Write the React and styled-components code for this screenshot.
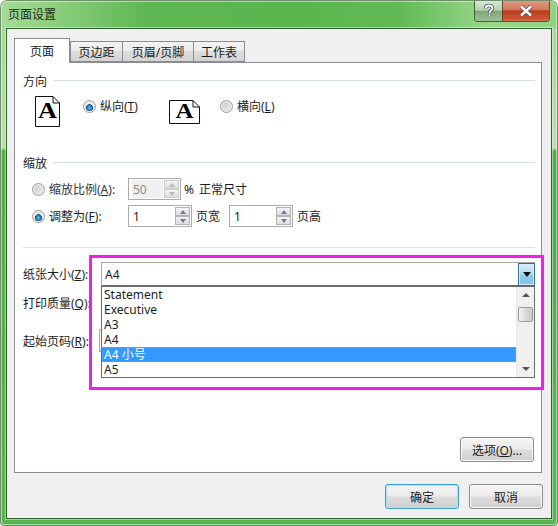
import * as React from "react";
import styled, { createGlobalStyle } from "styled-components";

const GlobalStyle = createGlobalStyle`
  html, body {
    margin: 0;
    padding: 0;
    background: #fff;
  }
  body {
    font-family: "Noto Sans", "Noto Sans CJK SC", sans-serif;
    font-size: 12px;
    color: #1c1c1c;
  }
  u {
    text-underline-offset: 1px;
  }
`;

const Window = styled.div`
  box-sizing: border-box;
  width: 558px;
  height: 526px;
  padding: 0 7px 8px;
  display: flex;
  flex-direction: column;
  border-radius: 7px 7px 4px 4px;
  background:
    linear-gradient(90deg, #a6dc98 0, #8fd07f 50px, #5db652 150px, #5bb54f 300px, #62ba56 400px, #9ad88c 490px, #8fd283 558px) 0 0 / 100% 29px no-repeat,
    linear-gradient(#a0d896 0, #b5e2ab 148px, #4fb048 151px, #55b54e 100%);
  box-shadow: inset 0 0 0 1px #6f8f6a, inset 0 0 0 2px rgba(255, 255, 255, 0.5);
`;

const TitleBar = styled.div`
  height: 29px;
  flex: none;
  display: flex;
  justify-content: space-between;
  align-items: flex-start;
`;

const Caption = styled.div`
  margin: 7px 0 0 1px;
  font-size: 12px;
  line-height: 15px;
  color: #1a2a18;
`;

const CaptionButtons = styled.div`
  display: flex;
  height: 20px;
  margin-top: 1px;
  margin-right: 1px;
  border: 1px solid #3f5f3d;
  border-top: 0;
  border-radius: 0 0 4px 4px;
  overflow: hidden;
`;

const CaptionButton = styled.div`
  width: ${({ $wide }) => ($wide ? "46px" : "27px")};
  display: flex;
  align-items: center;
  justify-content: center;
  background: ${({ $wide }) =>
    $wide
      ? "linear-gradient(#e09a82 0, #d27a60 42%, #bd3e1c 50%, #c8502e 85%, #d46c4c 100%)"
      : "linear-gradient(#d6e6d2 0, #b6d2b0 45%, #7da876 52%, #9cc096 100%)"};
  border-left: ${({ $wide }) => ($wide ? "1px solid #6d3a2c" : "0")};
`;

const Client = styled.div`
  flex: 1;
  min-height: 0;
  display: flex;
  flex-direction: column;
  background: #f0f0f0;
  box-shadow: 0 0 0 1px #2f5f2e, 0 0 0 2px rgba(255, 255, 255, 0.45);
  padding: 9px 9px 9px 7px;
`;

const TabStrip = styled.div`
  height: 24px;
  flex: none;
  display: flex;
  align-items: flex-end;
  position: relative;
  z-index: 1;
`;

const Tab = styled.div`
  box-sizing: border-box;
  width: ${({ $w }) => $w}px;
  height: ${({ $active }) => ($active ? "25px" : "21px")};
  margin-bottom: ${({ $active }) => ($active ? "-1px" : "0")};
  margin-left: ${({ $first }) => ($first ? "0" : "-1px")};
  border: 1px solid #898c95;
  border-bottom: ${({ $active }) => ($active ? "0" : "1px solid #898c95")};
  background: ${({ $active }) => ($active ? "#fff" : "linear-gradient(#f3f3f3, #ececec 45%, #dcdcdc 50%, #d4d4d4)")};
  display: flex;
  align-items: center;
  justify-content: center;
  font-size: 12px;
`;

const Pane = styled.div`
  box-sizing: border-box;
  position: relative;
  flex: 1;
  min-height: 0;
  display: flex;
  flex-direction: column;
  background: #fff;
  border: 1px solid #898c95;
  padding: 10px 6px 10px 8px;
`;

const GroupHead = styled.div`
  display: flex;
  align-items: center;
  gap: 6px;
  height: 15px;
  margin-top: ${({ $top }) => $top || 0}px;
  &::after {
    content: "";
    flex: 1;
    height: 1px;
    background: #d8dfe8;
  }
`;

const Orientation = styled.div`
  display: flex;
  align-items: flex-start;
  margin: 8px 0 0 12px;
  height: 31px;
`;

const PageIcon = styled.svg`
  flex: none;
  display: block;
  overflow: visible;
  margin-top: ${({ $top }) => $top || 0}px;
`;

const RadioItem = styled.div`
  box-sizing: border-box;
  display: flex;
  align-items: center;
  gap: 4px;
  height: 20px;
  width: ${({ $w }) => ($w ? `${$w}px` : "auto")};
  margin-left: ${({ $left }) => $left}px;
`;

const Radio = styled.span`
  box-sizing: border-box;
  flex: none;
  width: 13px;
  height: 13px;
  border-radius: 50%;
  border: 1px solid #9a9a9a;
  box-shadow: inset 0 0 0 1px #f4f4f4;
  background: ${({ $on }) =>
    $on
      ? "radial-gradient(circle at 50% 62%, #6ec4ee 0, #1f7fc0 2.2px, #0e4f86 3.4px, #e9e9e9 3.6px, #d8d8d8 100%)"
      : "linear-gradient(135deg, #c9c9c9, #ededed)"};
`;

const ScaleRow = styled.div`
  display: flex;
  align-items: center;
  height: 22px;
  margin: ${({ $top }) => $top}px 0 0 9px;
`;

const RadioLabel = styled.span`
  width: 79px;
  flex: none;
  margin-left: 4px;
  color: ${({ $muted }) => ($muted ? "#333" : "inherit")};
`;

const Spin = styled.div`
  box-sizing: border-box;
  width: ${({ $w }) => $w}px;
  height: 22px;
  flex: none;
  display: flex;
  align-items: center;
  justify-content: space-between;
  background: #fff;
  border: 1px solid #ababab;
  padding: 1px 1px 1px 3px;
  color: ${({ $disabled }) => ($disabled ? "#8a8a8a" : "#1c1c1c")};
`;

const SpinValue = styled.span`
  flex: 1;
  align-self: stretch;
  display: flex;
  align-items: center;
  padding-left: 1px;
  margin-right: 1px;
  background: ${({ $disabled }) => ($disabled ? "#f0f0f0" : "#fff")};
`;

const SpinButtons = styled.div`
  width: 15px;
  align-self: stretch;
  display: flex;
  flex-direction: column;
`;

const SpinButton = styled.div`
  flex: 1;
  display: flex;
  align-items: center;
  justify-content: center;
  border: 1px solid ${({ $disabled }) => ($disabled ? "#cdcdcd" : "#b3b3b3")};
  background: linear-gradient(#f4f4f4, #dedede);
  &::before {
    content: "";
    border-left: 3.5px solid transparent;
    border-right: 3.5px solid transparent;
    ${({ $dir, $disabled }) => {
      const c = $disabled ? "#b9b9b9" : "#6f76a8";
      return $dir === "up" ? `border-bottom: 4px solid ${c};` : `border-top: 4px solid ${c};`;
    }}
  }
`;

const Trailing = styled.span`
  flex: none;
  margin-left: ${({ $left }) => $left || 3}px;
  width: ${({ $w }) => ($w ? `${$w}px` : "auto")};
  word-spacing: 2px;
`;

const Separator = styled.div`
  height: 1px;
  background: #dfdfdf;
  margin-top: 20px;
`;

const FieldRow = styled.div`
  display: flex;
  align-items: center;
  height: ${({ $h }) => $h}px;
  margin-top: ${({ $top }) => $top}px;
`;

const FieldLabel = styled.span`
  width: 76px;
  flex: none;
  white-space: nowrap;
`;

const Combo = styled.div`
  box-sizing: border-box;
  flex: 1;
  height: 24px;
  margin: 0 0 0 2px;
  display: flex;
  align-items: center;
  justify-content: space-between;
  border: 1px solid #a9a9a9;
  border-bottom-color: #6b6b6b;
  padding-left: 3px;
  background: #fff;
`;

const ComboArrow = styled.div`
  box-sizing: border-box;
  width: 17px;
  height: 23px;
  border: 1px solid #3d6c8e;
  box-shadow: inset 0 0 0 1px #d4edf8;
  background: linear-gradient(#d8eefa, #b4dcf2 45%, #8fcbea 55%, #7fc2e6);
  display: flex;
  align-items: center;
  justify-content: center;
  margin-right: -1px;
  &::before {
    content: "";
    border-left: 4px solid transparent;
    border-right: 4px solid transparent;
    border-top: 5px solid #101010;
  }
`;

const HiddenInput = styled.div`
  box-sizing: border-box;
  width: 60px;
  height: 23px;
  border: 1px solid #ababab;
  background: #fff;
`;

const DropList = styled.div`
  box-sizing: border-box;
  position: absolute;
  left: 86px;
  top: 223px;
  width: 434px;
  height: 92px;
  display: flex;
  background: #fff;
  border: 1px solid #6b6b6b;
  z-index: 2;
`;

const Options = styled.div`
  flex: 1;
  min-width: 0;
`;

const Option = styled.div`
  box-sizing: border-box;
  height: 15px;
  line-height: 15px;
  padding-left: 2px;
  color: ${({ $selected }) => ($selected ? "#fff" : "#1c1c1c")};
  background: ${({ $selected }) => ($selected ? "#3399ff" : "transparent")};
  outline: ${({ $selected }) => ($selected ? "1px dotted #d98a2b" : "0")};
  outline-offset: -1px;
`;

const Scrollbar = styled.div`
  width: 17px;
  flex: none;
  display: flex;
  flex-direction: column;
  align-items: center;
  background: #f0f0f0;
  border-left: 1px solid #e6e6e6;
`;

const ScrollArrow = styled.div`
  height: 16px;
  display: flex;
  align-items: center;
  justify-content: center;
  flex: none;
  &::before {
    content: "";
    border-left: 4px solid transparent;
    border-right: 4px solid transparent;
    ${({ $dir }) => ($dir === "up" ? "border-bottom: 4px solid #555;" : "border-top: 4px solid #555;")}
  }
`;

const ScrollThumb = styled.div`
  box-sizing: border-box;
  width: 15px;
  height: 15px;
  margin-top: 4px;
  border: 1px solid #9a9a9a;
  border-radius: 2px;
  background: linear-gradient(90deg, #f4f4f4, #d6d6d6 60%, #c8c8c8);
`;

const Spacer = styled.div`
  flex: 1;
`;

const Highlight = styled.div`
  box-sizing: border-box;
  position: absolute;
  left: 74px;
  top: 192px;
  width: 455px;
  height: 135px;
  border: 3px solid #f01ee6;
  z-index: 3;
  pointer-events: none;
`;

const OptionsRow = styled.div`
  display: flex;
  justify-content: flex-end;
  margin-right: 1px;
`;

const Button = styled.div`
  box-sizing: border-box;
  width: 74px;
  height: 25px;
  display: flex;
  align-items: center;
  justify-content: center;
  border: 1px solid ${({ $primary }) => ($primary ? "#3aa0d0" : "#8a8a8a")};
  border-radius: 3px;
  box-shadow: inset 0 0 0 1px ${({ $primary }) => ($primary ? "#a8e4f8" : "#fbfbfb")};
  background: linear-gradient(#f4f4f4, #ececec 48%, #dcdcdc 52%, #d0d0d0);
  font-size: 12px;
`;

const ButtonText = styled.span`
  white-space: nowrap;
`;

const Footer = styled.div`
  display: flex;
  justify-content: flex-end;
  gap: 10px;
  margin: 11px -1px 0 0;
  flex: none;
`;

const PortraitIcon = () => (
  <PageIcon width="25" height="31" viewBox="0 0 25 31">
    <path d="M.5.5H18L24.5 7V30.5H.5Z M18 .5V7H24.5" fill="#fff" stroke="#111" />
    <text x="3" y="22" textLength="19" lengthAdjust="spacingAndGlyphs" fontFamily="Liberation Serif" fontWeight="700" fontSize="23" fill="#000">A</text>
  </PageIcon>
);

const LandscapeIcon = () => (
  <PageIcon $top={4} width="31" height="24" viewBox="0 0 31 24">
    <path d="M.5.5H24L30.5 7V23.5H.5Z M24 .5V7H30.5" fill="#fff" stroke="#111" />
    <text x="6.5" y="18" textLength="18" lengthAdjust="spacingAndGlyphs" fontFamily="Liberation Serif" fontWeight="700" fontSize="22" fill="#000">A</text>
  </PageIcon>
);

const paperSizes = ["Statement", "Executive", "A3", "A4", "A4 小号", "A5"];

const SpinBox = ({ value, w, disabled }) => (
  <Spin $w={w} $disabled={disabled}>
    <SpinValue $disabled={disabled}>{value}</SpinValue>
    <SpinButtons>
      <SpinButton $dir="up" $disabled={disabled} />
      <SpinButton $dir="down" $disabled={disabled} />
    </SpinButtons>
  </Spin>
);

export default function App() {
  return (
    <>
      <GlobalStyle />
      <Window>
        <TitleBar>
          <Caption>页面设置</Caption>
          <CaptionButtons>
            <CaptionButton>
              <svg width="12" height="14" viewBox="0 0 12 14">
                <path d="M2.5 4.5C2.5 2 4 1.5 6 1.5S9.5 2.5 9.5 4.5C9.5 6.5 6.5 6.5 6.5 9M6.5 10.5V12.5" fill="none" stroke="#3a4a5a" strokeWidth="3.4" />
                <path d="M2.5 4.5C2.5 2 4 1.5 6 1.5S9.5 2.5 9.5 4.5C9.5 6.5 6.5 6.5 6.5 9M6.5 10.5V12.5" fill="none" stroke="#fff" strokeWidth="1.8" />
              </svg>
            </CaptionButton>
            <CaptionButton $wide>
              <svg width="14" height="12" viewBox="0 0 14 12">
                <path d="M2 1.5L12 10.5M12 1.5L2 10.5" stroke="#5a4a50" strokeWidth="4" />
                <path d="M2 1.5L12 10.5M12 1.5L2 10.5" stroke="#fff" strokeWidth="2.4" />
              </svg>
            </CaptionButton>
          </CaptionButtons>
        </TitleBar>
        <Client>
          <TabStrip>
            <Tab $active $first $w={56}>页面</Tab>
            <Tab $first $w={53}>页边距</Tab>
            <Tab $w={72}>页眉/页脚</Tab>
            <Tab $w={52}>工作表</Tab>
          </TabStrip>
          <Pane>
            <GroupHead>方向</GroupHead>
            <Orientation>
              <PortraitIcon />
              <RadioItem $left={23} $w={86}>
                <Radio $on />
                <span>纵向(<u>T</u>)</span>
              </RadioItem>
              <LandscapeIcon />
              <RadioItem $left={20}>
                <Radio />
                <span>横向(<u>L</u>)</span>
              </RadioItem>
            </Orientation>
            <GroupHead $top={28}>缩放</GroupHead>
            <ScaleRow $top={8}>
              <Radio />
              <RadioLabel $muted>缩放比例(<u>A</u>):</RadioLabel>
              <SpinBox value="50" w={53} disabled />
              <Trailing>% 正常尺寸</Trailing>
            </ScaleRow>
            <ScaleRow $top={5}>
              <Radio $on />
              <RadioLabel>调整为(<u>F</u>):</RadioLabel>
              <SpinBox value="1" w={64} />
              <Trailing $left={4} $w={33}>页宽</Trailing>
              <SpinBox value="1" w={64} />
              <Trailing $left={4}>页高</Trailing>
            </ScaleRow>
            <Separator />
            <FieldRow $h={24} $top={14}>
              <FieldLabel>纸张大小(<u>Z</u>):</FieldLabel>
              <Combo>
                A4
                <ComboArrow />
              </Combo>
            </FieldRow>
            <FieldRow $h={16} $top={9}>
              <FieldLabel>打印质量(<u>Q</u>):</FieldLabel>
            </FieldRow>
            <FieldRow $h={23} $top={18}>
              <FieldLabel>起始页码(<u>R</u>):</FieldLabel>
              <HiddenInput />
            </FieldRow>
            <Spacer />
            <OptionsRow>
              <Button><ButtonText>选项(<u>O</u>)...</ButtonText></Button>
            </OptionsRow>
            <DropList>
              <Options>
                {paperSizes.map((size) => (
                  <Option key={size} $selected={size === "A4 小号"}>{size}</Option>
                ))}
              </Options>
              <Scrollbar>
                <ScrollArrow $dir="up" />
                <ScrollThumb />
                <Spacer />
                <ScrollArrow $dir="down" />
              </Scrollbar>
            </DropList>
            <Highlight />
          </Pane>
          <Footer>
            <Button $primary>确定</Button>
            <Button>取消</Button>
          </Footer>
        </Client>
      </Window>
    </>
  );
}
